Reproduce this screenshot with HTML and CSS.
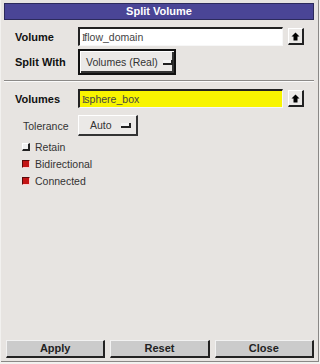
FILE: index.html
```html
<!DOCTYPE html>
<html>
<head>
<meta charset="utf-8">
<link rel="stylesheet" href="styles.css">
</head>
<body>
<div class="window">
  <div class="title">Split Volume</div>
  <div class="section top">
    <div class="row r-volume">
      <span class="label bold">Volume</span>
      <div class="field white"><span class="caret">I</span>flow_domain</div>
      <div class="arrowbtn"><svg width="9" height="9" viewBox="0 0 9 9"><path d="M4.5 0.5 L8.5 4.5 L6.5 4.5 L6.5 8.5 L2.5 8.5 L2.5 4.5 L0.5 4.5 Z" fill="#000"/></svg></div>
    </div>
    <div class="row r-split">
      <span class="label bold">Split With</span>
      <div class="option focused"><span>Volumes (Real)</span><span class="ind"></span></div>
    </div>
  </div>
  <div class="sep"></div>
  <div class="section mid">
    <div class="row r-volumes">
      <span class="label bold">Volumes</span>
      <div class="field yellow"><span class="caret">I</span>sphere_box</div>
      <div class="arrowbtn"><svg width="9" height="9" viewBox="0 0 9 9"><path d="M4.5 0.5 L8.5 4.5 L6.5 4.5 L6.5 8.5 L2.5 8.5 L2.5 4.5 L0.5 4.5 Z" fill="#000"/></svg></div>
    </div>
    <div class="row r-tol">
      <span class="label sub">Tolerance</span>
      <div class="option small"><span>Auto</span><span class="ind"></span></div>
    </div>
    <div class="checks">
      <div class="check"><span class="box off"></span>Retain</div>
      <div class="check"><span class="box on"></span>Bidirectional</div>
      <div class="check"><span class="box on"></span>Connected</div>
    </div>
  </div>
  <div class="spacer"></div>
  <div class="buttons">
    <div class="btn">Apply</div>
    <div class="btn">Reset</div>
    <div class="btn">Close</div>
  </div>
</div>
</body>
</html>
```

FILE: styles.css
```css
html, body {
  margin: 0;
  padding: 0;
  background: #f2f1ef;
}
body {
  width: 320px;
  height: 364px;
  font-family: "Liberation Sans", Arial, sans-serif;
  font-size: 10.5px;
  color: #111;
}
.window {
  box-sizing: border-box;
  width: 318px;
  height: 362px;
  margin: 0 0 0 1px;
  padding: 3px 4px 2px 3px;
  background: #e7e4e1;
  border-right: 1px solid #8a8886;
  border-bottom: 1px solid #8a8886;
  display: flex;
  flex-direction: column;
}
.title {
  height: 17px;
  background: #4a4596;
  color: #fff;
  font-weight: bold;
  font-size: 11px;
  line-height: 15px;
  text-align: center;
  border: 1px solid #2c2a5c;
  box-sizing: border-box;
}
.section.top {
  padding: 7px 0 0 0;
}
.row {
  display: flex;
  align-items: center;
  white-space: nowrap;
}
.label {
  width: 63px;
  padding-left: 11px;
  flex: none;
}
.bold { font-weight: bold; font-size: 11px; color: #111; }
.label.sub { padding-left: 19px; width: 55px; color: #333; }
.field {
  box-sizing: border-box;
  width: 205px;
  height: 19px;
  border-top: 2px solid #222;
  border-left: 2px solid #222;
  border-right: 1px solid #f7f7f7;
  border-bottom: 1px solid #f7f7f7;
  padding-left: 2px;
  line-height: 16px;
  color: #444;
}
.field.white { background: #fff; }
.field.yellow { background: #f8f400; }
.caret {
  font-family: "Liberation Serif", serif;
  font-size: 10px;
  color: #444;
  letter-spacing: -1px;
}
.arrowbtn {
  box-sizing: border-box;
  width: 16px;
  height: 17px;
  margin-left: 5px;
  background: #eceae8;
  border-top: 1px solid #fff;
  border-left: 1px solid #fff;
  border-right: 2px solid #222;
  border-bottom: 2px solid #222;
  display: flex;
  align-items: center;
  justify-content: center;
}
.r-split { margin-top: 3px; }
.option {
  box-sizing: border-box;
  display: flex;
  align-items: center;
  white-space: nowrap;
  background: #ebe9e7;
  border-top: 1px solid #fff;
  border-left: 1px solid #fff;
  border-right: 2px solid #333;
  border-bottom: 2px solid #333;
  color: #333;
}
.option.focused {
  width: 98px;
  height: 26px;
  border: 2px solid #111;
  box-shadow: inset 1px 1px 0 #fff, inset -2px -2px 0 #333;
  padding-left: 6px;
  gap: 5px;
}
.option.small {
  width: 60px;
  height: 21px;
  padding-left: 11px;
  gap: 9px;
}
.ind {
  width: 8px;
  height: 3px;
  background: #f5f5f5;
  border-right: 2px solid #222;
  border-bottom: 2px solid #222;
  display: inline-block;
  margin-top: 1px;
  flex: none;
}
.sep {
  height: 0;
  border-top: 1px solid #8c8a88;
  border-bottom: 1px solid #fbfbfb;
  margin-top: 5px;
}
.section.mid {
  padding-top: 7px;
}
.r-tol { margin-top: 7px; }
.checks {
  display: flex;
  flex-direction: column;
  padding-left: 18px;
  margin-top: 4px;
  gap: 4px;
}
.check {
  display: flex;
  align-items: center;
  height: 13px;
  color: #333;
}
.box {
  box-sizing: border-box;
  width: 8px;
  height: 8px;
  margin-right: 5px;
  border-top: 1px solid #fff;
  border-left: 1px solid #fff;
  border-right: 2px solid #222;
  border-bottom: 2px solid #222;
}
.box.off { background: #f0f0f0; }
.box.on {
  background: #c31414;
  border-top: 1px solid #5a0a0a;
  border-left: 1px solid #5a0a0a;
  border-right: 1px solid #ffd0d0;
  border-bottom: 1px solid #ffd0d0;
}
.spacer { flex: 1; }
.buttons {
  display: flex;
  gap: 5px;
  padding: 0 0 0 2px;
  margin-bottom: 1px;
}
.btn {
  box-sizing: border-box;
  flex: 1;
  height: 18px;
  background: #cbcbcb;
  border-top: 1px solid #f2f2f2;
  border-left: 1px solid #f2f2f2;
  border-right: 2px solid #222;
  border-bottom: 2px solid #222;
  text-align: center;
  font-weight: bold;
  font-size: 11px;
  line-height: 15px;
  color: #222;
}
```
